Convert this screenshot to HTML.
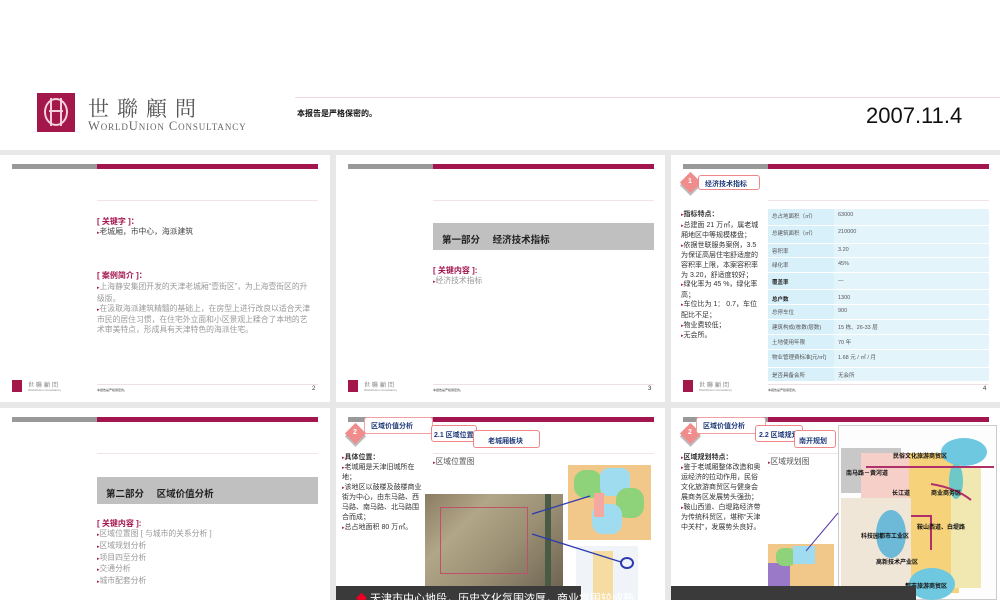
<!DOCTYPE html>
<html><head><meta charset="utf-8"><style>
*{margin:0;padding:0;box-sizing:border-box}
body{width:1000px;height:600px;overflow:hidden;background:#e8e8e8;font-family:"Liberation Sans","Noto Sans CJK SC",sans-serif;position:relative}
.a{position:absolute}
.hdr{left:0;top:0;width:1000px;height:150px;background:#fff}
.s{position:absolute;background:#fff;overflow:hidden}
.bg{position:absolute;left:12px;top:9px;width:85px;height:5px;background:#999}
.bm{position:absolute;left:97px;top:9px;width:221px;height:5px;background:#a3154f}
.ln{position:absolute;left:97px;top:45px;width:221px;height:1px;background:#f0e4ea}
.fl{position:absolute;left:12px;top:225px;width:10px;height:12px;background:#a3174a}
.ft{position:absolute;left:28px;top:225px;font-size:6px;color:#666;letter-spacing:2px;font-family:"Liberation Serif","Noto Serif CJK SC",serif}
.ft2{position:absolute;left:28px;top:233px;font-size:3px;color:#888}
.fline{position:absolute;left:97px;top:229px;width:221px;height:1px;background:#f0dfe6}
.fs{position:absolute;left:97px;top:233px;font-size:3px;color:#444}
.pn{position:absolute;left:312px;top:231px;font-size:6px;color:#333}
.k{font-size:8px;color:#a3154f;font-weight:bold}
.t{font-size:7.8px;color:#999;line-height:9.8px}
.b{font-size:7.5px;color:#333;line-height:10.5px}
.m{color:#a3154f;font-size:5px}
.gb{position:absolute;left:97px;width:221px;height:27px;background:#c0c0c0;font-size:9.5px;font-weight:bold;color:#222;padding:9px 0 0 9px;word-spacing:10px}
.dia{position:absolute;width:15px;height:15px;background:#f08c8c;transform:rotate(45deg);box-shadow:2px 2px 0 #bbb}
.dn{position:absolute;color:#fff;font-size:7px;font-weight:bold}
.box{position:absolute;border:1px solid #e88;border-radius:3px;font-size:7px;font-weight:bold;color:#1f3a7a;background:#fff}
.tr{position:absolute;left:97px;width:221px;border-bottom:1px solid #fff;font-size:5.5px;color:#555}
.tr .c1{position:absolute;left:0;top:0;bottom:0;width:66px;background:#d8f0fa;padding:3px 0 0 4px}
.tr .c2{position:absolute;left:66px;right:0;top:0;bottom:0;background:#e3f4fb;padding:3px 0 0 4px}
</style></head><body>
<div class="a hdr">
 <div class="a" style="left:37px;top:93px;width:38px;height:39px;background:#a3174a"></div>
 <div class="a" style="left:44px;top:98px;width:24px;height:28px;border:2px solid #f2d0dc;border-radius:50%/50%"></div>
 <div class="a" style="left:50px;top:98px;width:12px;height:28px;border-left:2px solid #f2d0dc;border-right:2px solid #f2d0dc"></div>
 <div class="a" style="left:49px;top:110px;width:14px;height:2px;background:#f2d0dc"></div>
 <div class="a" style="left:88px;top:93px;font-size:21px;color:#555;letter-spacing:8px;font-family:'Liberation Serif','Noto Serif CJK SC',serif">世聯顧問</div>
 <div class="a" style="left:88px;top:119px;font-size:12.5px;color:#666;font-family:'Liberation Serif',serif;font-variant:small-caps;letter-spacing:.9px">WorldUnion Consultancy</div>
 <div class="a" style="left:295px;top:97px;width:705px;height:1px;background:#f0d8e0"></div>
 <div class="a" style="left:297px;top:108px;font-size:8px;font-weight:bold;color:#111">本报告是严格保密的。</div>
 <div class="a" style="left:866px;top:103px;font-size:22px;color:#111">2007.11.4</div>
</div>

<!-- slide 2 -->
<div class="s" style="left:0;top:155px;width:330px;height:247px">
 <div class="bg"></div><div class="bm"></div><div class="ln"></div>
 <div class="a k" style="left:97px;top:61px">[ 关键字 ]：</div>
 <div class="a b" style="left:97px;top:72px;color:#444;font-size:7.8px"><span class="m">▸</span>老城厢，市中心，海派建筑</div>
 <div class="a k" style="left:97px;top:115px">[ 案例简介 ]：</div>
 <div class="a t" style="left:97px;top:127px;width:215px"><span class="m">▸</span>上海静安集团开发的天津老城厢“壹街区”，为上海壹街区的升级版。<br><span class="m">▸</span>在汲取海派建筑精髓的基础上，在房型上进行改良以适合天津市民的居住习惯，在住宅外立面和小区景观上糅合了本地的艺术审美特点，形成具有天津特色的海派住宅。</div>
 <div class="fl"></div><div class="ft">世聯顧問</div><div class="ft2">WorldUnion Consultancy</div><div class="fline"></div><div class="fs">本报告是严格保密的。</div><div class="pn">2</div>
</div>

<!-- slide 3 -->
<div class="s" style="left:336px;top:155px;width:329px;height:247px">
 <div class="bg"></div><div class="bm"></div><div class="ln"></div>
 <div class="gb" style="top:68px">第一部分 经济技术指标</div>
 <div class="a k" style="left:97px;top:110px">[ 关键内容 ]:</div>
 <div class="a t" style="left:97px;top:121px"><span class="m">▸</span>经济技术指标</div>
 <div class="fl"></div><div class="ft">世聯顧問</div><div class="ft2">WorldUnion Consultancy</div><div class="fline"></div><div class="fs">本报告是严格保密的。</div><div class="pn">3</div>
</div>

<!-- slide 4 -->
<div class="s" style="left:671px;top:155px;width:329px;height:247px">
 <div class="bg"></div><div class="bm"></div><div class="ln"></div>
 <div class="dia" style="left:12px;top:20px"></div><div class="dn" style="left:17px;top:23px">1</div>
 <div class="box" style="left:27px;top:20px;width:62px;height:15px;padding:3px 0 0 6px">经济技术指标</div>
 <div class="a b" style="left:10px;top:55px;width:80px;font-size:7px;line-height:9.6px"><span class="m">▸</span><b>指标特点：</b><br><span class="m">▸</span>总建面 21 万㎡，属老城厢地区中等规模楼盘；<br><span class="m">▸</span>依据世联服务案例，3.5 为保证高层住宅舒适度的容积率上限，本案容积率为 3.20，舒适度较好；<br><span class="m">▸</span>绿化率为 45 %，绿化率高；<br><span class="m">▸</span>车位比为 1： 0.7，车位配比不足；<br><span class="m">▸</span>物业费较低；<br><span class="m">▸</span>无会所。</div>
 <div class="tr" style="top:54px;height:17px"><div class="c1">总占地面积（㎡）</div><div class="c2">63000</div></div>
 <div class="tr" style="top:71px;height:18px"><div class="c1">总建筑面积（㎡）</div><div class="c2">210000</div></div>
 <div class="tr" style="top:89px;height:14px"><div class="c1">容积率</div><div class="c2">3.20</div></div>
 <div class="tr" style="top:103px;height:15px"><div class="c1">绿化率</div><div class="c2">45%</div></div>
 <div class="tr" style="top:118px;height:17px"><div class="c1" style="padding-top:5px"><b style="color:#222">覆盖率</b></div><div class="c2" style="padding-top:5px">—</div></div>
 <div class="tr" style="top:135px;height:15px"><div class="c1" style="padding-top:5px"><b style="color:#222">总户数</b></div><div class="c2" style="padding-top:5px">1300</div></div>
 <div class="tr" style="top:150px;height:15px"><div class="c1">总停车位</div><div class="c2">900</div></div>
 <div class="tr" style="top:165px;height:15px"><div class="c1">建筑构成(栋数/层数)</div><div class="c2">15 栋、26-33 层</div></div>
 <div class="tr" style="top:180px;height:15px"><div class="c1">土地使用年限</div><div class="c2">70 年</div></div>
 <div class="tr" style="top:195px;height:18px"><div class="c1">物业管理费标准[元/㎡]</div><div class="c2">1.68 元 / ㎡ / 月</div></div>
 <div class="tr" style="top:213px;height:14px"><div class="c1">是否具备会所</div><div class="c2">无会所</div></div>
 <div class="fl"></div><div class="ft">世聯顧問</div><div class="ft2">WorldUnion Consultancy</div><div class="fline"></div><div class="fs">本报告是严格保密的。</div><div class="pn">4</div>
</div>

<!-- slide 5 -->
<div class="s" style="left:0;top:408px;width:330px;height:192px">
 <div class="bg"></div><div class="bm"></div><div class="ln"></div>
 <div class="gb" style="top:69px">第二部分 区域价值分析</div>
 <div class="a k" style="left:97px;top:110px">[ 关键内容 ]:</div>
 <div class="a t" style="left:97px;top:121px"><span class="m">▸</span>区域位置图 [ 与城市的关系分析 ]<br><span class="m">▸</span>区域规划分析<br><span class="m">▸</span>项目四至分析<br><span class="m">▸</span>交通分析<br><span class="m">▸</span>城市配套分析</div>
</div>

<!-- slide 6 -->
<div class="s" style="left:336px;top:408px;width:329px;height:192px">
 <div class="bg"></div><div class="bm"></div><div class="ln"></div>
 <div class="dia" style="left:12px;top:18px"></div><div class="dn" style="left:17px;top:21px">2</div>
 <div class="box" style="left:28px;top:9px;width:69px;height:17px;padding:3px 0 0 6px;border-color:#f0a0a0">区域价值分析</div>
 <div class="box" style="left:95px;top:17px;width:46px;height:17px;padding:4px 0 0 2px">2.1 区域位置</div>
 <div class="box" style="left:137px;top:22px;width:67px;height:18px;padding:5px 0 0 14px">老城厢板块</div>
 <div class="a b" style="left:6px;top:45px;width:80px;font-size:7px;line-height:10px"><span class="m">▸</span><b>具体位置：</b><br><span class="m">▸</span>老城厢是天津旧城所在地；<br><span class="m">▸</span>该地区以鼓楼及鼓楼商业街为中心，由东马路、西马路、南马路、北马路围合而成；<br><span class="m">▸</span>总占地面积 80 万㎡。</div>
 <div class="a t" style="left:97px;top:49px;color:#555"><span class="m">▸</span>区域位置图</div>
 <div class="a" style="left:89px;top:86px;width:138px;height:92px;background:linear-gradient(135deg,#8a7c62,#b2a688 30%,#9b8f74 60%,#6f6552);"></div>
 <div class="a" style="left:104px;top:99px;width:88px;height:67px;border:1.5px solid #c0506a"></div>
 <div class="a" style="left:209px;top:86px;width:6px;height:92px;background:#4a5a44"></div>
 <div class="a" style="left:232px;top:57px;width:83px;height:75px;background:#f2c88a"></div>
 <div class="a" style="left:238px;top:62px;width:28px;height:28px;background:#8ed27a;border-radius:40%"></div>
 <div class="a" style="left:264px;top:60px;width:30px;height:28px;background:#9fdcf0;border-radius:30%"></div>
 <div class="a" style="left:280px;top:80px;width:28px;height:30px;background:#8ed27a;border-radius:40%"></div>
 <div class="a" style="left:256px;top:96px;width:30px;height:30px;background:#9fdcf0;border-radius:35%"></div>
 <div class="a" style="left:258px;top:85px;width:10px;height:24px;background:#f5a8a0"></div>
 <div class="a" style="left:240px;top:138px;width:62px;height:54px;background:#f0f4f8"></div>
 <div class="a" style="left:257px;top:143px;width:20px;height:49px;background:#f6dca0"></div>
 <div class="a" style="left:284px;top:149px;width:14px;height:12px;border:2px solid #2a3ab0;border-radius:50%"></div>
 <svg class="a" style="left:0;top:0" width="329" height="192"><line x1="196" y1="126" x2="285" y2="154" stroke="#2a3ab0" stroke-width="1.2"/><line x1="196" y1="106" x2="254" y2="88" stroke="#2a3ab0" stroke-width="1.2"/></svg>
 <div class="a" style="left:0;top:178px;width:245px;height:20px;background:#3a3a3a;color:#fff;font-size:11px;padding:4px 0 0 20px;white-space:nowrap"><span style="color:#e02">◆</span> 天津市中心地段，历史文化氛围浓厚，商业氛围较成熟</div>
</div>

<!-- slide 7 -->
<div class="s" style="left:671px;top:408px;width:329px;height:192px">
 <div class="bg"></div><div class="bm"></div><div class="ln"></div>
 <div class="dia" style="left:12px;top:18px"></div><div class="dn" style="left:17px;top:21px">2</div>
 <div class="box" style="left:25px;top:9px;width:70px;height:17px;padding:3px 0 0 6px;border-color:#f0a0a0">区域价值分析</div>
 <div class="box" style="left:84px;top:17px;width:48px;height:17px;padding:4px 0 0 3px">2.2 区域规划</div>
 <div class="box" style="left:123px;top:22px;width:42px;height:18px;padding:5px 0 0 4px">南开规划</div>
 <div class="a b" style="left:10px;top:45px;width:82px;font-size:7px;line-height:10px"><span class="m">▸</span><b>区域规划特点：</b><br><span class="m">▸</span>鉴于老城厢整体改造和奥运经济的拉动作用，民俗文化旅游商贸区与健身会展商务区发展势头强劲；<br><span class="m">▸</span>鞍山西道、白堤路经济带为传统科贸区，堪称“天津中关村”，发展势头良好。</div>
 <div class="a t" style="left:97px;top:49px;color:#555"><span class="m">▸</span>区域规划图</div>
 <div class="a" style="left:97px;top:136px;width:66px;height:56px;background:#f2c88a"></div>
 <div class="a" style="left:97px;top:155px;width:22px;height:37px;background:#9a7ac8"></div>
 <div class="a" style="left:105px;top:140px;width:20px;height:18px;background:#8ed27a;border-radius:40%"></div>
 <div class="a" style="left:122px;top:138px;width:22px;height:18px;background:#9fdcf0"></div>
 <div class="a" style="left:167px;top:17px;width:159px;height:175px;background:#fdfdfd;border:1px solid #ccc"></div>
 <div class="a" style="left:170px;top:40px;width:60px;height:45px;background:#c8c8c8"></div>
 <div class="a" style="left:190px;top:45px;width:50px;height:50px;background:#f6d0c8"></div>
 <div class="a" style="left:238px;top:45px;width:50px;height:140px;background:#f6d27a"></div>
 <div class="a" style="left:170px;top:90px;width:70px;height:100px;background:#f0e6d8"></div>
 <div class="a" style="left:280px;top:60px;width:30px;height:120px;background:#f0e8b0"></div>
 <div class="a" style="left:205px;top:102px;width:30px;height:48px;background:#5eb4d8;border-radius:50%;opacity:.9"></div>
 <div class="a" style="left:270px;top:30px;width:46px;height:28px;background:#6ec8e0;border-radius:50%"></div>
 <div class="a" style="left:278px;top:55px;width:14px;height:36px;background:#6ec8c8;border-radius:50%"></div>
 <div class="a" style="left:238px;top:160px;width:46px;height:32px;background:#6ec8e0;border-radius:50%"></div>
 <div class="a" style="left:195px;top:58px;width:128px;height:2px;background:#b0306a"></div>
 <svg class="a" style="left:0;top:0" width="329" height="192"><path d="M260 76 Q285 80 300 92" stroke="#b0306a" stroke-width="2" fill="none"/><path d="M240 108 L260 108 L260 142" stroke="#b0306a" stroke-width="2" fill="none"/><line x1="135" y1="143" x2="167" y2="105" stroke="#5a3ab0"/></svg>
 <div class="a" style="left:175px;top:60px;font-size:6px;font-weight:bold;color:#111">南马路－黄河道</div>
 <div class="a" style="left:222px;top:43px;font-size:6px;font-weight:bold;color:#111">民俗文化旅游商贸区</div>
 <div class="a" style="left:221px;top:80px;font-size:6px;font-weight:bold;color:#111">长江道</div>
 <div class="a" style="left:260px;top:80px;font-size:6px;font-weight:bold;color:#111">商业商务区</div>
 <div class="a" style="left:246px;top:114px;font-size:6px;font-weight:bold;color:#111">鞍山西道、白堤路</div>
 <div class="a" style="left:190px;top:123px;font-size:6px;font-weight:bold;color:#111">科技园都市工业区</div>
 <div class="a" style="left:205px;top:149px;font-size:6px;font-weight:bold;color:#111">高新技术产业区</div>
 <div class="a" style="left:234px;top:173px;font-size:6px;font-weight:bold;color:#111">都市旅游商贸区</div>
 <div class="a" style="left:0;top:178px;width:245px;height:20px;background:#3a3a3a"></div>
</div>
</body></html>
